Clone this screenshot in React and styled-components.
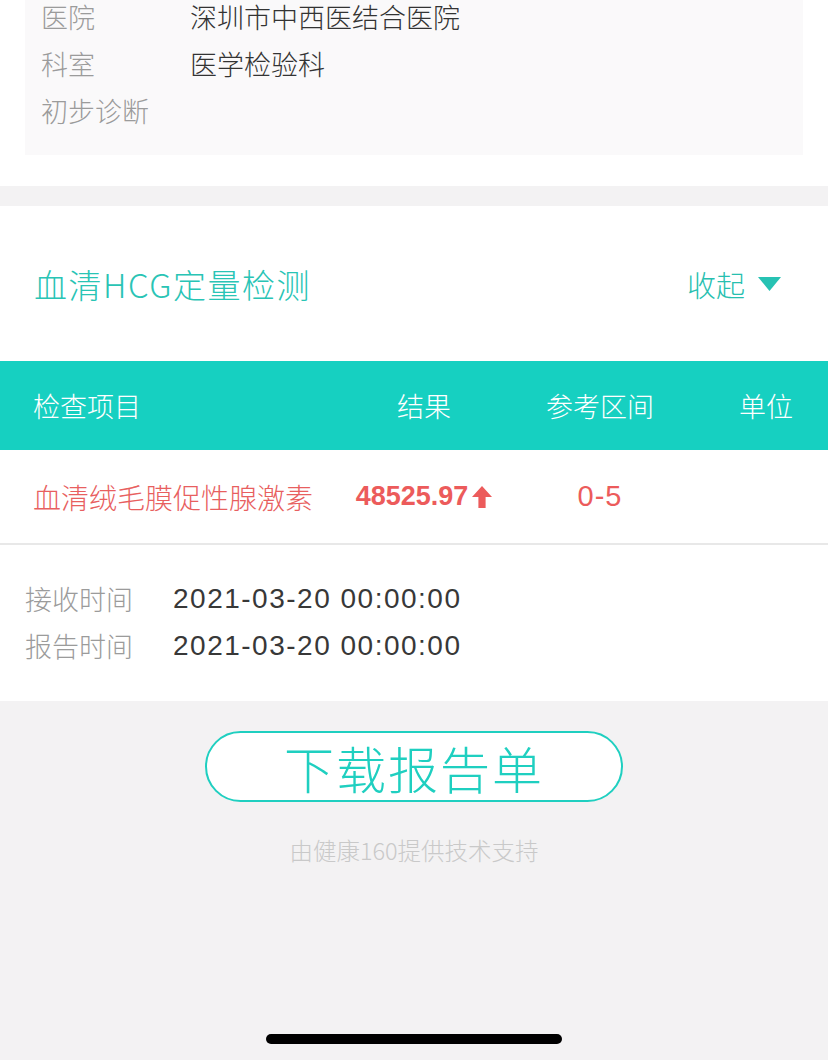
import React from 'react'
import styled, { createGlobalStyle } from 'styled-components'

const GlobalStyle = createGlobalStyle`
  html, body {
    margin: 0;
    padding: 0;
    background: #f3f2f3;
  }
  body {
    font-family: "Noto Sans CJK SC", "Liberation Sans", sans-serif;
    font-weight: 300;
    -webkit-font-smoothing: antialiased;
  }
`

const info = [
  { label: '医院', value: '深圳市中西医结合医院' },
  { label: '科室', value: '医学检验科' },
  { label: '初步诊断', value: '' },
]

const times = [
  { label: '接收时间', value: '2021-03-20 00:00:00' },
  { label: '报告时间', value: '2021-03-20 00:00:00' },
]

const UpArrow = () => (
  <svg width="20" height="22" viewBox="0 0 20 22">
    <path d="M10 0 L20 11 H13.6 V22 H6.4 V11 H0 Z" fill="#ec5b5b" />
  </svg>
)

const CaretDown = () => (
  <svg width="23" height="14" viewBox="0 0 23 14">
    <path d="M0 0 H23 L11.5 14 Z" fill="#27c2b3" />
  </svg>
)

const App = () => {
  return (
    <Page>
      <GlobalStyle />
      <TopSection>
        <InfoCard>
          {info.map((row) => (
            <InfoRow key={row.label}>
              <InfoLabel>{row.label}</InfoLabel>
              <InfoValue>{row.value}</InfoValue>
            </InfoRow>
          ))}
        </InfoCard>
      </TopSection>

      <ReportSection>
        <ReportHeader>
          <ReportTitle>血清HCG定量检测</ReportTitle>
          <Toggle>
            收起
            <CaretDown />
          </Toggle>
        </ReportHeader>

        <TableHead>
          <HeadCell>检查项目</HeadCell>
          <HeadCell center>结果</HeadCell>
          <HeadCell center>参考区间</HeadCell>
          <HeadCell center>单位</HeadCell>
        </TableHead>
        <TableRow>
          <ItemName>血清绒毛膜促性腺激素</ItemName>
          <ResultCell>
            48525.97
            <UpArrow />
          </ResultCell>
          <RangeCell>0-5</RangeCell>
          <RangeCell />
        </TableRow>

        <TimeBlock>
          {times.map((row) => (
            <TimeRow key={row.label}>
              <TimeLabel>{row.label}</TimeLabel>
              <TimeValue>{row.value}</TimeValue>
            </TimeRow>
          ))}
        </TimeBlock>
      </ReportSection>

      <Footer>
        <DownloadButton>下载报告单</DownloadButton>
        <Credit>由健康160提供技术支持</Credit>
      </Footer>

      <HomeIndicator />
    </Page>
  )
}

const Page = styled.div`
  width: 828px;
  min-height: 1060px;
  background: #f3f2f3;
  overflow: hidden;
  position: relative;
`
const TopSection = styled.div`
  background: #ffffff;
  padding: 0 25px 31px;
`
const InfoCard = styled.div`
  display: flex;
  flex-direction: column;
  gap: 13px;
  background: #faf9fa;
  padding: 0 16px 27px;
`
const InfoRow = styled.div`
  display: flex;
  height: 34px;
  align-items: center;
  font-size: 27px;
  line-height: 1.2;
`
const InfoLabel = styled.span`
  width: 149px;
  color: #9b9b9b;
`
const InfoValue = styled.span`
  color: #333333;
`
const ReportSection = styled.div`
  background: #ffffff;
  margin-top: 20px;
`
const ReportHeader = styled.div`
  height: 155px;
  display: flex;
  align-items: center;
  justify-content: space-between;
  padding: 0 47px 0 34px;
`
const ReportTitle = styled.div`
  font-size: 33px;
  letter-spacing: 1.5px;
  color: #29c4b5;
`
const Toggle = styled.div`
  display: flex;
  align-items: center;
  gap: 13px;
  font-size: 29px;
  color: #27bfb0;
`
const columns = `1fr 144px 208px 124px`
const TableHead = styled.div`
  display: grid;
  grid-template-columns: ${columns};
  height: 89px;
  align-items: center;
  padding-left: 33px;
  background: #16d0c1;
`
const HeadCell = styled.div`
  color: #ffffff;
  font-size: 27px;
  text-align: ${({ center }) => (center ? 'center' : 'left')};
`
const TableRow = styled.div`
  display: grid;
  grid-template-columns: ${columns};
  height: 93px;
  align-items: center;
  padding-left: 33px;
  border-bottom: 2px solid #e8e8e8;
  color: #e85f5f;
`
const ItemName = styled.div`
  font-size: 28px;
  white-space: nowrap;
`
const ResultCell = styled.div`
  display: flex;
  justify-content: center;
  align-items: center;
  gap: 4px;
  font-family: "Liberation Sans", sans-serif;
  font-weight: bold;
  font-size: 27px;
  color: #ec5b5b;
`
const RangeCell = styled.div`
  text-align: center;
  font-family: "Liberation Sans", sans-serif;
  font-size: 29px;
  letter-spacing: 1px;
  color: #ec5b5b;
`
const TimeBlock = styled.div`
  padding: 30px 25px 32px;
`
const TimeRow = styled.div`
  display: flex;
  height: 47px;
  align-items: center;
`
const TimeLabel = styled.span`
  width: 148px;
  font-size: 27px;
  color: #9b9b9b;
`
const TimeValue = styled.span`
  font-family: "Liberation Sans", sans-serif;
  font-size: 28px;
  letter-spacing: 1.5px;
  color: #383838;
`
const Footer = styled.div`
  display: flex;
  flex-direction: column;
  align-items: center;
  padding-top: 30px;
`
const DownloadButton = styled.button`
  width: 418px;
  height: 71px;
  border: 2px solid #1fcfc0;
  border-radius: 36px;
  background: #ffffff;
  color: #1fcfc0;
  font-family: "Noto Sans CJK SC", sans-serif;
  font-weight: 300;
  font-size: 50px;
  letter-spacing: 2px;
  line-height: 1;
  padding: 0;
  display: flex;
  align-items: center;
  justify-content: center;
`
const Credit = styled.div`
  margin-top: 31px;
  font-size: 23.5px;
  color: #c9c9c9;
`
const HomeIndicator = styled.div`
  position: absolute;
  left: 266px;
  top: 1034px;
  width: 296px;
  height: 10px;
  border-radius: 5px;
  background: #000000;
`

export default App
